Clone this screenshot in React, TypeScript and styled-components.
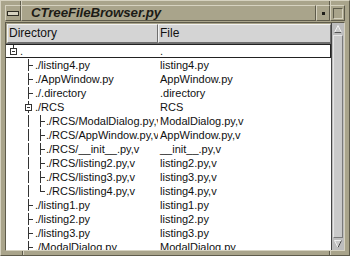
import styled, { createGlobalStyle } from "styled-components";

const GlobalStyle = createGlobalStyle`
  html, body { margin: 0; padding: 0; background: #a9a48b; }
  body { font-family: "Liberation Sans", Arial, sans-serif; }
`;

const frame = {
  base: "#a9a48b",
  light: "#d6d2c0",
  dark: "#5e5b4b",
};

const Window = styled.div`
  position: relative;
  width: 350px;
  height: 256px;
  box-sizing: border-box;
  background: ${frame.base};
  border: 1px solid;
  border-color: ${frame.light} ${frame.dark} ${frame.dark} ${frame.light};
  padding: 4px;
  display: flex;
  flex-direction: column;
  overflow: hidden;
`;

const CornerMark = styled.span<{ $side: "top" | "bottom"; $x: number }>`
  position: absolute;
  ${(p) => p.$side}: 0;
  left: ${(p) => p.$x}px;
  width: 1px;
  height: 4px;
  background: ${frame.dark};
  box-shadow: 1px 0 0 ${frame.light};
`;

const TitleBar = styled.div`
  height: 16px;
  display: flex;
`;

const Raised = styled.div`
  box-sizing: border-box;
  background: ${frame.base};
  border: 1px solid;
  border-color: ${frame.light} ${frame.dark} ${frame.dark} ${frame.light};
`;

const MenuButton = styled(Raised)`
  width: 16px;
  display: flex;
  align-items: center;
  justify-content: center;
`;

const MenuBar = styled.span`
  width: 10px;
  height: 3px;
  background: ${frame.light};
  border: 1px solid #2e2c24;
`;

const TitleArea = styled(Raised)`
  flex: 1;
  display: flex;
  align-items: center;
  padding-left: 9px;
  overflow: hidden;
`;

const TitleText = styled.span`
  font-size: 13.3px;
  line-height: 14px;
  font-weight: bold;
  font-style: italic;
  color: #1c1b16;
  letter-spacing: -0.1px;
`;

const MinButton = styled(Raised)`
  width: 14px;
  display: flex;
  align-items: center;
  justify-content: center;
`;

const Dot = styled.span`
  width: 3px;
  height: 3px;
  background: #1e1d18;
`;

const MaxButton = styled(Raised)`
  width: 15px;
  display: flex;
  align-items: center;
  justify-content: center;
`;

const MaxBox = styled.span`
  width: 8px;
  height: 9px;
  border: 1px solid;
  border-color: ${frame.dark} ${frame.light} ${frame.light} ${frame.dark};
`;

const Body = styled.div`
  flex: 1;
  margin-top: 1px;
  display: flex;
  border: 1px solid;
  border-color: ${frame.dark} ${frame.light} ${frame.light} ${frame.dark};
  min-height: 0;
`;

const Pane = styled.div`
  flex: 1;
  display: flex;
  flex-direction: column;
  min-width: 0;
`;

const Header = styled.div`
  height: 19px;
  display: flex;
  background: #d4d4d4;
  margin: 1px 0 0 1px;
`;

const HeaderCell = styled.div<{ $width?: number }>`
  box-sizing: border-box;
  ${(p) => (p.$width ? `width: ${p.$width}px;` : "flex: 1;")}
  border: 1px solid;
  border-color: #f2f2f2 #6e6e6e #6e6e6e #f2f2f2;
  font-size: 12px;
  color: #111;
  padding-left: 1px;
  line-height: 16px;
`;

const Rows = styled.div`
  flex: 1;
  background: #fff;
  overflow: hidden;
  border-top: 1px solid #6e6e6e;
`;

const Row = styled.div<{ $focus?: boolean }>`
  height: 14px;
  box-sizing: border-box;
  display: flex;
  font-size: 11px;
  color: #111;
  border: 1px solid ${(p) => (p.$focus ? "#222" : "transparent")};
  border-left: 0;
`;

const DirCell = styled.div`
  width: 152px;
  display: flex;
  align-items: stretch;
  overflow: hidden;
  white-space: nowrap;
`;

const FileCell = styled.div`
  flex: 1;
  padding-left: 2px;
  display: flex;
  align-items: center;
  white-space: nowrap;
  overflow: hidden;
`;

const Label = styled.span`
  display: flex;
  align-items: center;
`;

const Pad = styled.span<{ $w: number }>`
  flex: none;
  width: ${(p) => p.$w}px;
`;

const Guide = styled.span<{ $w: number }>`
  flex: none;
  position: relative;
  width: ${(p) => p.$w}px;
  &::before {
    content: "";
    position: absolute;
    left: 6px;
    top: -1px;
    bottom: -1px;
    width: 1px;
    background: #333;
  }
`;

const Branch = styled.span<{ $w: number; $last?: boolean }>`
  flex: none;
  position: relative;
  width: ${(p) => p.$w}px;
  &::before {
    content: "";
    position: absolute;
    left: 6px;
    top: -1px;
    ${(p) => (p.$last ? "height: 7px;" : "bottom: -1px;")}
    width: 1px;
    background: #333;
  }
  &::after {
    content: "";
    position: absolute;
    left: 6px;
    top: 6px;
    width: 5px;
    height: 1px;
    background: #333;
  }
`;

const FolderBranch = styled.span<{ $w: number; $stemTop?: boolean }>`
  flex: none;
  position: relative;
  width: ${(p) => p.$w}px;
  &::before {
    content: "";
    position: absolute;
    left: 6px;
    top: -1px;
    ${(p) => (p.$stemTop ? "height: 4px;" : "bottom: -1px;")}
    width: 1px;
    background: #333;
  }
`;

const Toggle = styled.span`
  position: absolute;
  left: 3px;
  top: 3px;
  width: 5px;
  height: 5px;
  border: 1px solid #333;
  background: #fff;
  &::after {
    content: "";
    position: absolute;
    left: 1px;
    top: 2px;
    width: 3px;
    height: 1px;
    background: #333;
  }
`;

const ScrollBar = styled.div`
  width: 12px;
  display: flex;
  flex-direction: column;
  background: #bdbdbd;
  border-left: 1px solid #444;
`;

const Arrow = styled.div`
  height: 12px;
  display: flex;
  align-items: center;
  justify-content: center;
`;

const Trough = styled.div`
  flex: 1;
  margin: 0 1px;
  border: 1px solid;
  border-color: #e6e6e6 #7a7a7a #7a7a7a #e6e6e6;
  background: #c9c9c9;
`;

interface Entry {
  dir: string;
  file: string;
  depth: 0 | 1 | 2;
  folder?: boolean;
  last?: boolean;
}

const entries: Entry[] = [
  { dir: ".", file: ".", depth: 0, folder: true },
  { dir: "./listing4.py", file: "listing4.py", depth: 1 },
  { dir: "./AppWindow.py", file: "AppWindow.py", depth: 1 },
  { dir: "./.directory", file: ".directory", depth: 1 },
  { dir: "./RCS", file: "RCS", depth: 1, folder: true },
  { dir: "./RCS/ModalDialog.py,v", file: "ModalDialog.py,v", depth: 2 },
  { dir: "./RCS/AppWindow.py,v", file: "AppWindow.py,v", depth: 2 },
  { dir: "./RCS/__init__.py,v", file: "__init__.py,v", depth: 2 },
  { dir: "./RCS/listing2.py,v", file: "listing2.py,v", depth: 2 },
  { dir: "./RCS/listing3.py,v", file: "listing3.py,v", depth: 2 },
  { dir: "./RCS/listing4.py,v", file: "listing4.py,v", depth: 2, last: true },
  { dir: "./listing1.py", file: "listing1.py", depth: 1 },
  { dir: "./listing2.py", file: "listing2.py", depth: 1 },
  { dir: "./listing3.py", file: "listing3.py", depth: 1 },
  { dir: "./ModalDialog.py", file: "ModalDialog.py", depth: 1 },
];

function TreeGutter({ entry }: { entry: Entry }) {
  if (entry.depth === 0) {
    return (
      <>
        <Pad $w={1} />
        <FolderBranch $w={13} $stemTop>
          <Toggle />
        </FolderBranch>
      </>
    );
  }
  if (entry.depth === 1) {
    return (
      <>
        <Pad $w={16} />
        {entry.folder ? (
          <FolderBranch $w={13}>
            <Toggle />
          </FolderBranch>
        ) : (
          <Branch $w={13} />
        )}
      </>
    );
  }
  return (
    <>
      <Pad $w={16} />
      <Guide $w={12} />
      <Branch $w={12} $last={entry.last} />
    </>
  );
}

function UpArrow() {
  return (
    <svg width="8" height="8" viewBox="0 0 8 8">
      <path d="M4 0.5 L7.5 7.5 L0.5 7.5 Z" fill="#c9c9c9" stroke="#f0f0f0" />
      <path d="M4 0.5 L7.5 7.5 L0.5 7.5" fill="none" stroke="#555" strokeDasharray="0 8 16" />
    </svg>
  );
}

function DownArrow() {
  return (
    <svg width="8" height="8" viewBox="0 0 8 8">
      <path d="M0.5 0.5 L7.5 0.5 L4 7.5 Z" fill="#c9c9c9" stroke="#f0f0f0" />
      <path d="M7.5 0.5 L4 7.5" fill="none" stroke="#444" />
    </svg>
  );
}

export default function App() {
  return (
    <>
      <GlobalStyle />
      <Window>
        <CornerMark $side="top" $x={19} />
        <CornerMark $side="top" $x={328} />
        <CornerMark $side="bottom" $x={21} />
        <CornerMark $side="bottom" $x={328} />
        <TitleBar>
          <MenuButton>
            <MenuBar />
          </MenuButton>
          <TitleArea>
            <TitleText>CTreeFileBrowser.py</TitleText>
          </TitleArea>
          <MinButton>
            <Dot />
          </MinButton>
          <MaxButton>
            <MaxBox />
          </MaxButton>
        </TitleBar>
        <Body>
          <Pane>
            <Header>
              <HeaderCell $width={151}>Directory</HeaderCell>
              <HeaderCell>File</HeaderCell>
            </Header>
            <Rows>
              {entries.map((e, i) => (
                <Row key={e.dir} $focus={i === 0}>
                  <DirCell>
                    <TreeGutter entry={e} />
                    <Label>{e.dir}</Label>
                  </DirCell>
                  <FileCell>{e.file}</FileCell>
                </Row>
              ))}
            </Rows>
          </Pane>
          <ScrollBar>
            <Arrow>
              <UpArrow />
            </Arrow>
            <Trough />
            <Arrow>
              <DownArrow />
            </Arrow>
          </ScrollBar>
        </Body>
      </Window>
    </>
  );
}
